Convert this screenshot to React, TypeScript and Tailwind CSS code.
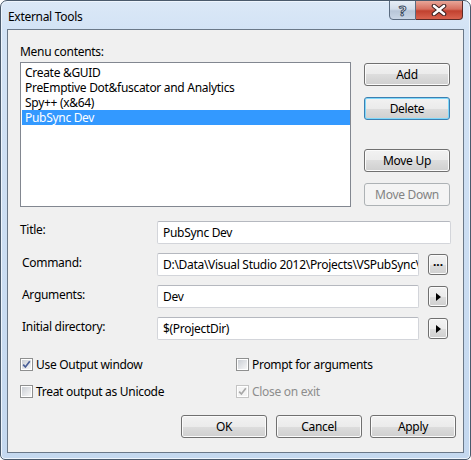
import React from "react";

const FONT = "font-['Noto_Sans',sans-serif] tracking-[-0.3px]";

function Btn({
  children,
  variant = "normal",
  className = "",
}: {
  children: React.ReactNode;
  variant?: "normal" | "default" | "disabled";
  className?: string;
}) {
  const base =
    "flex items-center justify-center rounded-[3px] border text-[12px] leading-none";
  const v =
    variant === "default"
      ? "border-[#3c7fb1] bg-[linear-gradient(180deg,#f2f2f2_0%,#ebebeb_50%,#dddddd_50%,#cfcfcf_100%)] shadow-[inset_0_0_0_1px_#7fd8fa] text-black"
      : variant === "disabled"
      ? "border-[#adb2b5] bg-[#f4f4f4] text-[#838383]"
      : "border-[#707070] bg-[linear-gradient(180deg,#f2f2f2_0%,#ebebeb_50%,#dddddd_50%,#cfcfcf_100%)] shadow-[inset_0_0_0_1px_#fbfbfb] text-black";
  return <div className={`${base} ${v} ${className}`}>{children}</div>;
}

function Input({ value, className = "" }: { value: string; className?: string }) {
  return (
    <div
      className={`flex h-[23px] items-center overflow-hidden whitespace-nowrap rounded-[2px] border border-[#d3d5da] border-t-[#b5b8bf] bg-white pl-[5px] text-[12px] text-black ${className}`}
    >
      {value}
    </div>
  );
}

function Check({ checked, disabled }: { checked?: boolean; disabled?: boolean }) {
  return (
    <div
      className={`flex h-[13px] w-[13px] shrink-0 items-center justify-center border ${
        disabled ? "border-[#c4c4c4]" : "border-[#8e8f8f]"
      } bg-white p-[1px]`}
    >
      <div
        className={`flex h-full w-full items-center justify-center ${
          disabled
            ? "bg-[#f4f4f4]"
            : "bg-[linear-gradient(135deg,#cbcfd5_0%,#f6f6f6_100%)]"
        }`}
      >
        {checked && (
          <svg width="9" height="9" viewBox="0 0 9 9">
            <path
              d="M1.2 4.6 L3.4 7 L7.8 1.2"
              fill="none"
              stroke={disabled ? "#a8a8a8" : "#4a5f97"}
              strokeWidth="1.7"
            />
          </svg>
        )}
      </div>
    </div>
  );
}

function ArrowBtn() {
  return (
    <Btn className="h-[21px] w-[20px]">
      <svg width="5" height="8" viewBox="0 0 5 8">
        <path d="M0 0 L5 4 L0 8 Z" fill="#000" />
      </svg>
    </Btn>
  );
}

export default function App() {
  return (
    <div
      className={`${FONT} relative flex h-[460px] w-[471px] flex-col overflow-hidden rounded-t-[7px] rounded-b-[5px] border border-[#4a5a6c] bg-[linear-gradient(180deg,#dbe8f7_0%,#d3e3f5_28px,#c4d8ef_100%)] shadow-[inset_0_0_0_1px_#eef5fd]`}
    >
      {/* title bar */}
      <div className="flex h-[28px] items-start">
        <div className="pl-[7px] pt-[8px] text-[12px] leading-[15px] text-black">
          External Tools
        </div>
        <div className="ml-auto mr-[7px] mt-[-1px] flex h-[20px]">
          <div className="flex h-[20px] w-[27px] items-center justify-center rounded-bl-[4px] border border-[#5a6b80] bg-[linear-gradient(180deg,#e6edf6_0%,#d2dcea_45%,#b8c6d8_55%,#c9d6e6_100%)] text-[15px] font-bold leading-none text-white [-webkit-text-stroke:1px_#3a4a60]">
            ?
          </div>
          <div className="flex h-[20px] w-[47px] items-center justify-center rounded-br-[4px] border border-l-0 border-[#5c2a26] bg-[linear-gradient(180deg,#e8a698_0%,#d66f5f_45%,#c1412f_55%,#d9634f_100%)]">
            <svg width="16" height="12" viewBox="0 0 16 12">
              <path
                d="M3 2 L13 10 M13 2 L3 10"
                stroke="#3b2020"
                strokeWidth="4.6"
                strokeLinecap="round"
              />
              <path
                d="M3 2 L13 10 M13 2 L3 10"
                stroke="#ffffff"
                strokeWidth="2.6"
                strokeLinecap="round"
              />
            </svg>
          </div>
        </div>
      </div>

      {/* client area */}
      <div className="ml-[6px] h-[424px] w-[457px] border border-[#6a7888] bg-[#f0f0f0] pl-[12px] text-[12px] text-black">
        <div className="mt-[14px] h-[15px] leading-[15px]">Menu contents:</div>
        <div className="mt-[3px] flex">
          <div className="h-[145px] w-[331px] border border-[#828790] bg-white pl-[1px] pt-[2px] leading-[15px]">
            <div className="pl-[3px]">Create &amp;GUID</div>
            <div className="pl-[3px]">PreEmptive Dot&amp;fuscator and Analytics</div>
            <div className="pl-[3px]">Spy++ (x&amp;64)</div>
            <div className="bg-[#3399ff] pl-[3px] text-white">PubSync Dev</div>
          </div>
          <div className="ml-[13px] mt-[1px] flex flex-col">
            <Btn className="h-[23px] w-[86px]">Add</Btn>
            <Btn variant="default" className="mt-[11px] h-[23px] w-[86px]">
              Delete
            </Btn>
            <Btn className="mt-[29px] h-[23px] w-[86px]">Move Up</Btn>
            <Btn variant="disabled" className="mt-[11px] h-[23px] w-[86px]">
              Move Down
            </Btn>
          </div>
        </div>

        <div className="mt-[14px] flex flex-col gap-[9px]">
          <div className="flex h-[23px] items-start">
            <div className="w-[137px] pt-[1px] leading-[15px]">Title:</div>
            <Input value="PubSync Dev" className="w-[294px]" />
          </div>
          <div className="flex h-[23px] items-center">
            <div className="ml-[2px] w-[135px] self-start pt-[2px] leading-[15px]">Command:</div>
            <Input value="D:\Data\Visual Studio 2012\Projects\VSPubSync\VSPubSync.exe" className="w-[262px]" />
            <Btn className="ml-[9px] h-[21px] w-[20px] items-end pb-[6px] text-[9px] font-bold tracking-[0px]">
              ...
            </Btn>
          </div>
          <div className="flex h-[23px] items-center">
            <div className="ml-[2px] w-[135px] self-start pt-[2px] leading-[15px]">Arguments:</div>
            <Input value="Dev" className="w-[262px]" />
            <div className="ml-[9px]">
              <ArrowBtn />
            </div>
          </div>
          <div className="flex h-[23px] items-center">
            <div className="ml-[2px] w-[135px] self-start pt-[2px] leading-[15px]">Initial directory:</div>
            <Input value="$(ProjectDir)" className="w-[262px]" />
            <div className="ml-[9px]">
              <ArrowBtn />
            </div>
          </div>
        </div>

        <div className="mt-[18px] grid grid-cols-[216px_200px] gap-y-[14px]">
          <div className="flex h-[13px] items-center gap-[3px]">
            <Check checked />
            <span className="leading-[15px]">Use Output window</span>
          </div>
          <div className="flex h-[13px] items-center gap-[3px]">
            <Check />
            <span className="leading-[15px]">Prompt for arguments</span>
          </div>
          <div className="flex h-[13px] items-center gap-[3px]">
            <Check />
            <span className="leading-[15px]">Treat output as Unicode</span>
          </div>
          <div className="flex h-[13px] items-center gap-[3px]">
            <Check checked disabled />
            <span className="leading-[15px] text-[#8d8d8d]">Close on exit</span>
          </div>
        </div>

        <div className="ml-[161px] mt-[17px] flex">
          <Btn className="h-[23px] w-[86px]">OK</Btn>
          <Btn className="ml-[9px] h-[23px] w-[86px]">Cancel</Btn>
          <Btn className="ml-[8px] h-[23px] w-[86px]">Apply</Btn>
        </div>
      </div>
    </div>
  );
}
